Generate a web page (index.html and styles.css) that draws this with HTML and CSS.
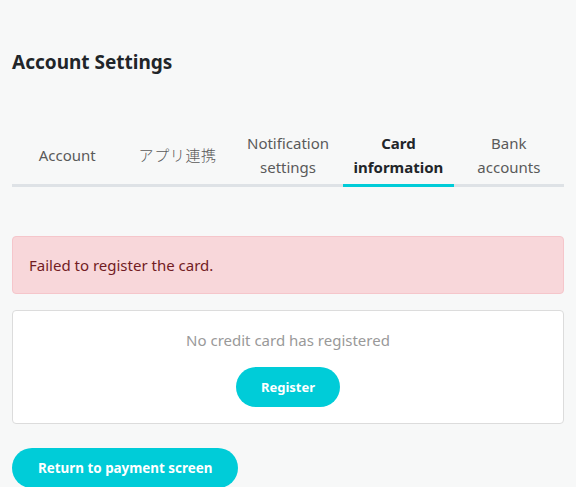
FILE: index.html
```html
<!DOCTYPE html>
<html>
<head>
<meta charset="utf-8">
<link rel="stylesheet" href="styles.css">
</head>
<body>
<div class="page">
  <h1 class="title">Account Settings</h1>
  <nav class="tabs">
    <a class="tab">Account</a>
    <a class="tab jp">アプリ連携</a>
    <a class="tab">Notification<br>settings</a>
    <a class="tab active">Card<br>information</a>
    <a class="tab">Bank<br>accounts</a>
  </nav>
  <div class="alert">Failed to register the card.</div>
  <div class="card">
    <p class="empty">No credit card has registered</p>
    <button class="btn">Register</button>
  </div>
  <button class="btn btn-wide">Return to payment screen</button>
</div>
</body>
</html>
```
FILE: styles.css
```css
* { box-sizing: border-box; }
html, body { margin: 0; padding: 0; }
body {
  background: #f7f8f8;
  font-family: "Noto Sans", "Noto Sans CJK JP", sans-serif;
  color: #212529;
  overflow: hidden;
}
.page {
  padding: 50px 12px 0;
}
.title {
  margin: 0;
  font-size: 19px;
  line-height: 24px;
  font-weight: 700;
  color: #212529;
}
.tabs {
  display: flex;
  margin-top: 57px;
  border-bottom: 3px solid #dee2e6;
}
.tab {
  flex: 1;
  display: flex;
  align-items: center;
  justify-content: center;
  text-align: center;
  font-size: 15px;
  line-height: 24px;
  color: #5a5a5a;
  padding: 0 0 5px;
  height: 53px;
  position: relative;
}
.tab.jp {
  font-family: "Noto Sans CJK JP", sans-serif;
  font-weight: 300;
  letter-spacing: 0.6px;
}
.tab.active {
  color: #212529;
  font-weight: 700;
}
.tab.active::after {
  content: "";
  position: absolute;
  left: 0; right: 0; bottom: -3px;
  height: 3px;
  background: #00ccd8;
}
.alert {
  margin-top: 49px;
  background: #f8d7da;
  border: 1px solid #f5c6cb;
  border-radius: 4px;
  color: #721c24;
  font-size: 15px;
  line-height: 24px;
  padding: 16px 16px;
}
.card {
  margin-top: 16px;
  background: #fff;
  border: 1px solid #dcdcdc;
  border-radius: 4px;
  padding: 17px 16px 16px;
  display: flex;
  flex-direction: column;
  align-items: center;
}
.empty {
  margin: 0 0 15px;
  font-size: 15px;
  line-height: 24px;
  color: #999;
}
.btn {
  border: none;
  background: #00ccd8;
  color: #fff;
  font-family: inherit;
  font-weight: 700;
  font-size: 13px;
  height: 40px;
  padding: 0 25px;
  border-radius: 20px;
}
.btn-wide {
  margin-top: 24px;
  font-size: 13.4px;
  padding: 0 26px;
}
```
